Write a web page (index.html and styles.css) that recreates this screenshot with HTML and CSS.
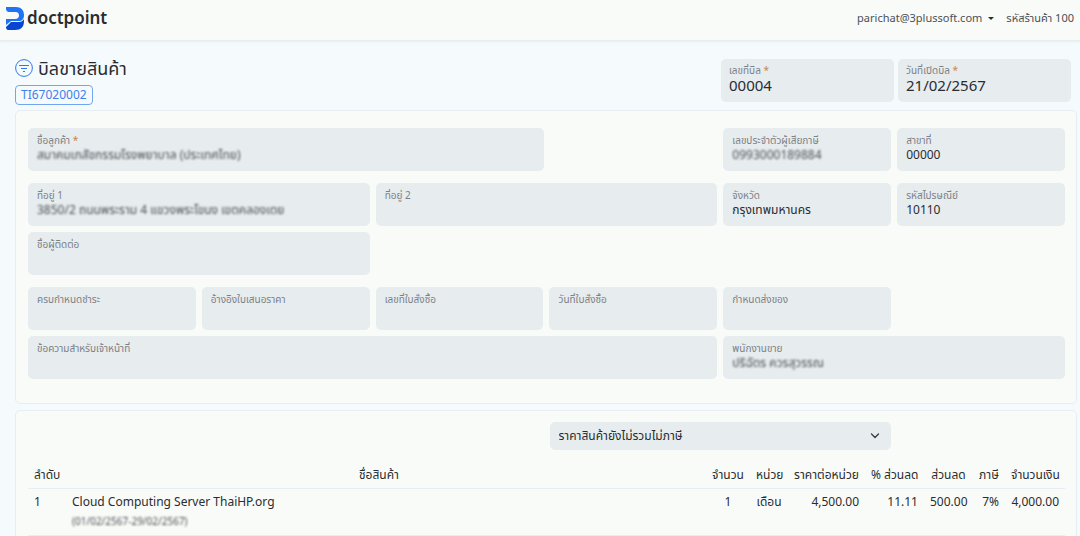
FILE: index.html
```html
<!DOCTYPE html>
<html lang="th">
<head>
    <meta charset="UTF-8">
    <meta name="viewport" content="width=device-width, initial-scale=1.0">
    <title>บิลขายสินค้า - doctpoint</title>
    <link rel="stylesheet" href="styles.css">
</head>
<body>

    <header class="navbar">
        <a class="brand" href="#">
            <svg width="18" height="23" viewBox="0 0 18 23">
                <path fill="#1f74f5" d="M0 0H10C15 0 18 3 18 8C18 12 16 14 13 14H5L0 18V12H9C12 12 13 10 13 8.500C13 6.500 12 5 9.500 5H3C1 5 0 3.500 0 2Z"/>
                <path fill="#0845d3" d="M0 20L5 15H13C15.500 15 17 14 18 12V14C18 20 15 23 9 23H2C1 23 0 22 0 20Z"/>
            </svg>
            <span>doctpoint</span>
        </a>
        <nav class="nav-right">
            <button class="user" type="button">parichat@3plussoft.com <span class="caret"></span></button>
            <span>รหัสร้านค้า 100</span>
        </nav>
    </header>

    <main>
        <div class="page-head">
            <div>
                <h1>
                    <svg width="18" height="18" viewBox="0 0 18 18" fill="none" stroke="#2f78ee">
                        <circle cx="9" cy="9" r="8.400"/>
                        <path d="M4 6.500H14M6 9.500H12M8 12.500H10"/>
                    </svg>
                    บิลขายสินค้า
                </h1>
                <span class="bill-code">TI67020002</span>
            </div>
            <div class="bill-fields">
                <div class="field large">
                    <label for="billNo">เลขที่บิล <b>*</b></label>
                    <input type="text" id="billNo" value="00004">
                </div>
                <div class="field large">
                    <label for="billDate">วันที่เปิดบิล <b>*</b></label>
                    <input type="text" id="billDate" value="21/02/2567">
                </div>
            </div>
        </div>

        <!-- Customer -->
        <section class="card">
            <div class="row">
                <div class="field w3">
                    <label for="customer">ชื่อลูกค้า <b>*</b></label>
                    <input class="masked" type="text" id="customer" value="สมาคมเภสัชกรรมโรงพยาบาล (ประเทศไทย)">
                </div>
                <div class="field c5">
                    <label for="taxId">เลขประจำตัวผู้เสียภาษี</label>
                    <input class="masked" type="text" id="taxId" value="0993000189884">
                </div>
                <div class="field">
                    <label for="branch">สาขาที่</label>
                    <input type="text" id="branch" value="00000">
                </div>
            </div>
            <div class="row group">
                <div class="field w2">
                    <label for="address1">ที่อยู่ 1</label>
                    <input class="masked" type="text" id="address1" value="3850/2 ถนนพระราม 4 แขวงพระโขนง เขตคลองเตย">
                </div>
                <div class="field w2">
                    <label for="address2">ที่อยู่ 2</label>
                    <input type="text" id="address2">
                </div>
                <div class="field">
                    <label for="province">จังหวัด</label>
                    <input type="text" id="province" value="กรุงเทพมหานคร">
                </div>
                <div class="field">
                    <label for="zip">รหัสไปรษณีย์</label>
                    <input type="text" id="zip" value="10110">
                </div>
                <div class="field w2">
                    <label for="contact">ชื่อผู้ติดต่อ</label>
                    <input type="text" id="contact">
                </div>
            </div>
            <div class="row group">
                <div class="field">
                    <label for="due">ครบกำหนดชำระ</label>
                    <input type="text" id="due">
                </div>
                <div class="field">
                    <label for="quote">อ้างอิงใบเสนอราคา</label>
                    <input type="text" id="quote">
                </div>
                <div class="field">
                    <label for="poNo">เลขที่ใบสั่งซื้อ</label>
                    <input type="text" id="poNo">
                </div>
                <div class="field">
                    <label for="poDate">วันที่ใบสั่งซื้อ</label>
                    <input type="text" id="poDate">
                </div>
                <div class="field">
                    <label for="delivery">กำหนดส่งของ</label>
                    <input type="text" id="delivery">
                </div>
                <div class="field w4">
                    <label for="note">ข้อความสำหรับเจ้าหน้าที่</label>
                    <input type="text" id="note">
                </div>
                <div class="field w2">
                    <label for="sales">พนักงานขาย</label>
                    <input class="masked" type="text" id="sales" value="ปริฉัตร ควรสุวรรณ">
                </div>
            </div>
        </section>

        <!-- Items -->
        <section class="card items">
            <div class="row">
                <div class="select-wrap">
                    <select aria-label="ภาษี">
                        <option>ราคาสินค้ายังไม่รวมไม่ภาษี</option>
                    </select>
                    <svg width="10" height="6" viewBox="0 0 10 6" fill="none" stroke="#343a40" stroke-width="1.300" stroke-linecap="round" stroke-linejoin="round">
                        <path d="M1.500 1L5 4.500L8.500 1"/>
                    </svg>
                </div>
            </div>
            <table>
                <thead>
                    <tr>
                        <th class="no">ลำดับ</th>
                        <th class="name">ชื่อสินค้า</th>
                        <th class="qty">จำนวน</th>
                        <th class="unit">หน่วย</th>
                        <th class="price">ราคาต่อหน่วย</th>
                        <th class="percent">% ส่วนลด</th>
                        <th class="discount">ส่วนลด</th>
                        <th class="tax">ภาษี</th>
                        <th class="total">จำนวนเงิน</th>
                    </tr>
                </thead>
                <tbody>
                    <tr>
                        <td>1</td>
                        <td>Cloud Computing Server ThaiHP.org<small class="masked">(01/02/2567-29/02/2567)</small></td>
                        <td class="center">1</td>
                        <td class="center">เดือน</td>
                        <td class="num">4,500.00</td>
                        <td class="num">11.11</td>
                        <td class="num">500.00</td>
                        <td class="num">7%</td>
                        <td class="num">4,000.00</td>
                    </tr>
                </tbody>
            </table>
        </section>
    </main>

</body>
</html>
```
FILE: styles.css
```css
* {
    box-sizing: border-box;
}
body {
    margin: 0;
    background: #f5fafd;
    color: #292d31;
    font-family: "Noto Sans", "Noto Sans Thai", sans-serif;
    font-size: 12px;
    line-height: 18px;
}
input, select, button {
    font: inherit;
    color: inherit;
    border: none;
    background: none;
    padding: 0;
}
.navbar {
    display: flex;
    justify-content: space-between;
    align-items: center;
    height: 41px;
    padding: 0 6px;
    background: #f9fbf8;
    border-bottom: 1px solid #e6eeee;
    box-shadow: 0 1px 2px #e8eff1;
}
.brand {
    display: flex;
    align-items: center;
    gap: 3px;
    padding-bottom: 4px;
    color: #292d31;
    font-size: 17px;
    font-weight: 600;
    text-decoration: none;
}
.nav-right {
    display: flex;
    gap: 12px;
    padding-bottom: 4px;
    color: #4b5055;
    font-size: 11px;
}
.user {
    display: flex;
    align-items: center;
    gap: 6px;
}
.caret {
    border: 3px solid transparent;
    border-top-color: #292d31;
    border-bottom: none;
}
main {
    padding: 18px 3px 0 15px;
}
.page-head {
    display: flex;
    justify-content: space-between;
    margin-bottom: 5px;
    padding-right: 6px;
}
h1 {
    display: flex;
    align-items: center;
    gap: 5px;
    margin: 0 0 8px;
    font-size: 18px;
    font-weight: 400;
    line-height: 18px;
}
.bill-code {
    display: inline-block;
    padding: 0 5px;
    border: 1px solid #71a6f5;
    border-radius: 4px;
    color: #3f80ee;
}
.bill-fields {
    display: grid;
    grid-template-columns: 1fr 1fr;
    gap: 4px;
    width: 350px;
}
.card {
    margin-bottom: 6px;
    padding: 17px 11px 24px 12px;
    background: #f9fbf8;
    border: 1px solid #e6eef3;
    border-radius: 5px;
}
.row {
    display: grid;
    grid-template-columns: repeat(6, 1fr);
    gap: 6px;
}
.group {
    margin-top: 12px;
}
.field {
    height: 43px;
    padding: 4px 9px;
    background: #e7ecee;
    border-radius: 5px;
}
.field label {
    display: block;
    color: #7b8187;
    font-size: 10px;
    line-height: 16px;
}
.field b {
    color: #c98450;
    font-weight: 400;
}
.field input {
    display: block;
    width: 100%;
    height: 14px;
    line-height: 14px;
    overflow: visible;
}
.field.large {
    padding-left: 8px;
}
.field.large label {
    line-height: 15px;
}
.field.large input {
    font-size: 15px;
}
.w2 {
    grid-column: span 2;
}
.w3 {
    grid-column: span 3;
}
.w4 {
    grid-column: span 4;
}
.c5 {
    grid-column: 5;
}
.masked {
    filter: blur(1px);
    color: #4b5055;
}
.items {
    padding-top: 11px;
}
.select-wrap {
    position: relative;
    grid-column: 4 / span 2;
}
.select-wrap select {
    display: block;
    width: 100%;
    height: 28px;
    padding: 0 9px;
    background: #e7ecee;
    border-radius: 5px;
    appearance: none;
}
.select-wrap svg {
    position: absolute;
    top: 11px;
    right: 11px;
}
table {
    width: 100%;
    margin-top: 12px;
    border-collapse: collapse;
    table-layout: fixed;
}
th, td {
    padding: 4px 6px;
    border-bottom: 1px solid #e6eef3;
    font-weight: 400;
    text-align: center;
    vertical-align: top;
    white-space: nowrap;
}
td {
    text-align: left;
}
td.center {
    text-align: center;
}
td.num {
    text-align: right;
}
td small {
    display: block;
    color: #868b90;
    font-size: 10px;
    line-height: 20px;
}
.no {
    width: 38px;
}
.name {
    padding-right: 20px;
}
.qty {
    width: 44px;
}
.unit {
    width: 38px;
}
.price {
    width: 77px;
}
.percent {
    width: 59px;
}
.discount {
    width: 49px;
}
.tax {
    width: 32px;
}
.total {
    width: 60px;
}
```
